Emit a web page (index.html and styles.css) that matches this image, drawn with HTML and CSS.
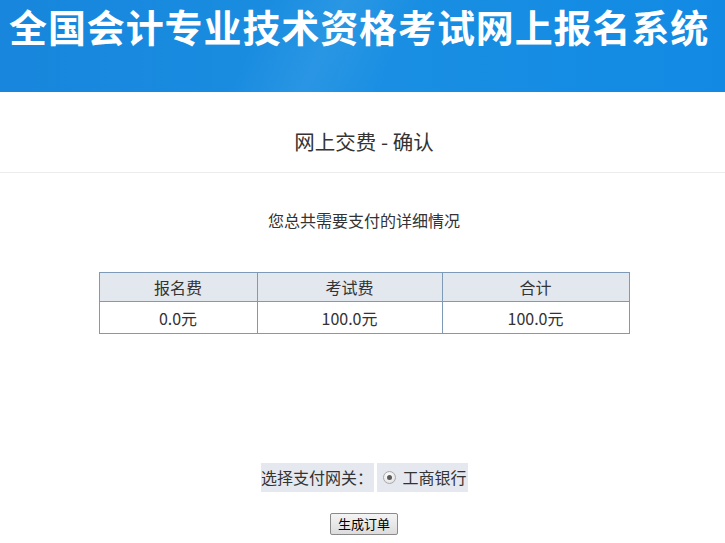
FILE: index.html
```html
<!DOCTYPE html>
<html lang="zh-CN">
<head>
<meta charset="utf-8">
<title>全国会计专业技术资格考试网上报名系统</title>
<link rel="stylesheet" href="styles.css">
</head>
<body>
<header class="banner">
  <h1 class="banner-title">全国会计专业技术资格考试网上报名系统</h1>
</header>
<main class="content">
  <h2 class="page-title">网上交费 - 确认</h2>
  <div class="panel">
    <p class="summary">您总共需要支付的详细情况</p>
    <table class="fee-table">
      <colgroup>
        <col class="c1"><col class="c2"><col class="c3">
      </colgroup>
      <thead>
        <tr><th>报名费</th><th>考试费</th><th>合计</th></tr>
      </thead>
      <tbody>
        <tr><td>0.0元</td><td>100.0元</td><td>100.0元</td></tr>
      </tbody>
    </table>
    <div class="gateway">
      <div class="gw-label">选择支付网关：</div>
      <label class="gw-option"><span class="radio"><span class="dot"></span></span>工商银行</label>
    </div>
    <div class="actions">
      <button class="btn" type="button">生成订单</button>
    </div>
  </div>
</main>
</body>
</html>
```
FILE: styles.css
```css
* { box-sizing: border-box; }
body {
  margin: 0;
  background: #fff;
  color: #333;
  font-family: "Noto Sans CJK SC", "Noto Sans", sans-serif;
}
.banner {
  height: 92px;
  display: flex;
  align-items: flex-start;
  background:
    linear-gradient(115deg, rgba(255,255,255,0) 0%, rgba(255,255,255,0) 35%, rgba(255,255,255,0.07) 45%, rgba(255,255,255,0) 55%, rgba(255,255,255,0) 100%),
    linear-gradient(90deg, #1786dc 0%, #1a8fe2 50%, #128ae4 100%);
  padding: 3px 0 0 9px;
}
.banner-title {
  margin: 0;
  color: #fff;
  font-size: 38px;
  font-weight: 700;
  letter-spacing: 0.9px;
  line-height: 46px;
  white-space: nowrap;
}
.page-title {
  margin: 0;
  padding: 18px 0 0 3px;
  height: 81px;
  line-height: 62px;
  text-align: center;
  font-size: 20.5px;
  font-weight: normal;
  color: #333;
  border-bottom: 1px solid #ececec;
}
.panel {
  padding-left: 3px;
}
.summary {
  margin: 35px 0 0;
  line-height: 24px;
  text-align: center;
  font-size: 16px;
}
.fee-table {
  margin: 40px auto 0;
  border-collapse: collapse;
  width: 530px;
  table-layout: fixed;
  font-size: 16px;
}
.c1 { width: 158px; }
.c2 { width: 185px; }
.c3 { width: 187px; }
.fee-table th, .fee-table td {
  border: 1px solid #7d9bb6;
  text-align: center;
  padding: 0;
  font-weight: normal;
}
.fee-table th {
  background: #e3e7ee;
  height: 29px;
}
.fee-table td {
  height: 32px;
}
.gateway {
  margin-top: 129px;
  display: flex;
  justify-content: center;
  gap: 3px;
  font-size: 16px;
}
.gw-label, .gw-option {
  background: #e5e8ee;
  height: 29px;
  line-height: 29px;
}
.gw-label {
  width: 113px;
  text-align: center;
  white-space: nowrap;
}
.gw-option {
  width: 91px;
  display: flex;
  align-items: center;
  padding-left: 6px;
  white-space: nowrap;
}
.radio {
  width: 13px;
  height: 13px;
  border-radius: 50%;
  border: 1px solid #a9a9a9;
  background: radial-gradient(circle at 40% 35%, #ffffff 0%, #e6e6e6 70%, #d0d0d0 100%);
  display: flex;
  align-items: center;
  justify-content: center;
  margin-right: 7px;
  flex: none;
}
.dot {
  width: 5px;
  height: 5px;
  border-radius: 50%;
  background: #5a5a5a;
}
.actions {
  margin-top: 21px;
  display: flex;
  justify-content: center;
}
.btn {
  width: 68px;
  height: 22px;
  padding: 0;
  font-family: "Noto Sans CJK SC", sans-serif;
  font-size: 13px;
  line-height: 20px;
  color: #000;
  border: 1px solid #8a8a8a;
  border-radius: 2px;
  background: linear-gradient(#f4f4f4, #dcdcdc);
}
```
